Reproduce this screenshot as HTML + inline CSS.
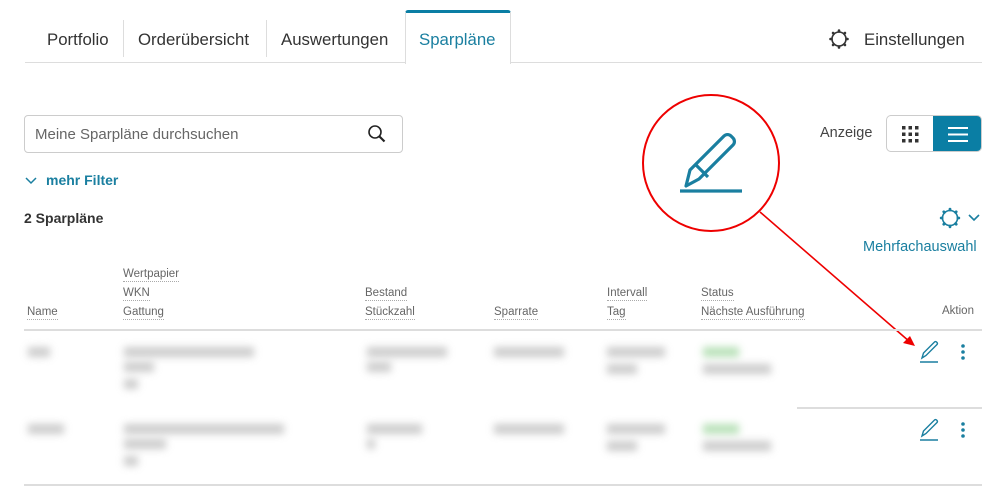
<!DOCTYPE html>
<html><head><meta charset="utf-8"><style>
*{margin:0;padding:0;box-sizing:border-box}
body{width:998px;height:496px;background:#fff;font-family:"Liberation Sans",sans-serif;position:relative;overflow:hidden;color:#333}
.a{position:absolute;white-space:nowrap}
.tab{font-size:16.8px;color:#333;top:30px}
.sep{position:absolute;top:20px;width:1px;height:37px;background:#ddd}
.h{font-size:11.5px;color:#666;border-bottom:1px dotted #aaa;line-height:14px}
.bl{position:absolute;background:#aaa;filter:blur(4px);opacity:.6;height:10px}
.teal{color:#1a7fa0}
</style></head><body>
<div class="a" style="left:25px;top:62px;width:957px;height:1px;background:#ddd"></div>
<div class="a tab" style="left:47px">Portfolio</div>
<div class="sep" style="left:123px"></div>
<div class="a tab" style="left:138px">Orderübersicht</div>
<div class="sep" style="left:266px"></div>
<div class="a tab" style="left:281px">Auswertungen</div>
<div class="a" style="left:405px;top:10px;width:106px;height:54px;background:#fff;border:1px solid #ddd;border-top:3px solid #0a7ea4;border-bottom:none;border-radius:3px 3px 0 0"></div>
<div class="a tab teal" style="left:419px">Sparpläne</div>
<svg class="a" style="left:828px;top:28px" width="22" height="22" viewBox="0 0 22 22" fill="none" stroke="#333" stroke-width="1.6"><circle cx="11" cy="11" r="7"/><g stroke-width="2.6" stroke-linecap="round"><path d="M11 2.5v1M11 18.5v1M2.5 11h1M18.5 11h1M5 5l.7.7M16.3 16.3l.7.7M5 17l.7-.7M16.3 5.7L17 5"/></g></svg>
<div class="a tab" style="left:864px">Einstellungen</div>

<div class="a" style="left:24px;top:115px;width:379px;height:38px;border:1px solid #ccc;border-radius:4px"></div>
<div class="a" style="left:35px;top:126px;font-size:15px;color:#666">Meine Sparpläne durchsuchen</div>
<svg class="a" style="left:366px;top:123px" width="22" height="22" viewBox="0 0 22 22" fill="none" stroke="#222" stroke-width="1.6"><circle cx="9" cy="9" r="6"/><path d="M13.5 13.5l5 5" stroke-width="2.2"/></svg>
<svg class="a" style="left:25px;top:177px" width="12" height="8" viewBox="0 0 12 8" fill="none" stroke="#1a7fa0" stroke-width="1.5"><path d="M1 1l5 5 5-5"/></svg>
<div class="a teal" style="left:46px;top:172px;font-size:14px;font-weight:bold">mehr Filter</div>
<div class="a" style="left:24px;top:210px;font-size:14px;font-weight:bold;color:#333">2 Sparpläne</div>

<div class="a" style="left:820px;top:125px;font-size:14.5px;color:#444">Anzeige</div>
<div class="a" style="left:886px;top:115px;width:96px;height:37px;border:1px solid #ccc;border-radius:5px;overflow:hidden">
<div style="position:absolute;right:0;top:0;width:48px;height:37px;background:#0a7ea4"></div>
<svg style="position:absolute;left:15px;top:10px" width="17" height="17" viewBox="0 0 17 17" fill="#333"><rect x="0" y="0" width="3.5" height="3.5"/><rect x="6.5" y="0" width="3.5" height="3.5"/><rect x="13" y="0" width="3.5" height="3.5"/><rect x="0" y="6.5" width="3.5" height="3.5"/><rect x="6.5" y="6.5" width="3.5" height="3.5"/><rect x="13" y="6.5" width="3.5" height="3.5"/><rect x="0" y="13" width="3.5" height="3.5"/><rect x="6.5" y="13" width="3.5" height="3.5"/><rect x="13" y="13" width="3.5" height="3.5"/></svg>
<svg style="position:absolute;left:61px;top:10px" width="20" height="17" viewBox="0 0 20 17" stroke="#fff" stroke-width="2"><path d="M0 2h20M0 8.5h20M0 15h20"/></svg>
</div>

<svg class="a" style="left:938px;top:207px" width="46" height="22" viewBox="0 0 46 22" fill="none" stroke="#1a7fa0" stroke-width="1.6"><circle cx="12" cy="11" r="7.5"/><g stroke-width="2.8" stroke-linecap="round"><path d="M12 2.2v.8M12 19v.8M3.2 11h.8M20 11h.8M5.8 4.8l.6.6M17.6 16.6l.6.6M5.8 17.2l.6-.6M17.6 5.4l.6-.6"/></g><path d="M31 8l5 5 5-5"/></svg>
<div class="a teal" style="left:863px;top:239px;font-size:14.5px">Mehrfachauswahl</div>

<svg class="a" style="left:0;top:0" width="998" height="496" fill="none">
<circle cx="711" cy="163" r="68" stroke="#e00" stroke-width="2"/>
<path d="M760 212L910 342" stroke="#e00" stroke-width="1.6"/>
<path d="M915 346l-12-3 7-7z" fill="#e00"/>
<g stroke="#1a7fa0" stroke-width="3.2" stroke-linejoin="round"><path d="M686 186l4-16 34-34a5 5 0 0 1 7 0l2 2a5 5 0 0 1 0 7l-34 34z"/><path d="M696 165l12 12"/><path d="M680 191h62"/></g>
</svg>

<div class="a h" style="left:123px;top:267px">Wertpapier</div>
<div class="a h" style="left:123px;top:286px">WKN</div>
<div class="a h" style="left:27px;top:305px">Name</div>
<div class="a h" style="left:123px;top:305px">Gattung</div>
<div class="a h" style="left:365px;top:286px">Bestand</div>
<div class="a h" style="left:365px;top:305px">Stückzahl</div>
<div class="a h" style="left:494px;top:305px">Sparrate</div>
<div class="a h" style="left:607px;top:286px">Intervall</div>
<div class="a h" style="left:607px;top:305px">Tag</div>
<div class="a h" style="left:701px;top:286px">Status</div>
<div class="a h" style="left:701px;top:305px">Nächste Ausführung</div>
<div class="a" style="left:942px;top:305px;font-size:11.5px;color:#666">Aktion</div>
<div class="a" style="left:24px;top:329px;width:958px;height:2px;background:#ddd"></div>
<div class="a" style="left:797px;top:407px;width:185px;height:2px;background:#ddd"></div>
<div class="a" style="left:24px;top:484px;width:958px;height:2px;background:#ddd"></div>

<div class="bl" style="left:28px;top:347px;width:22px"></div>
<div class="bl" style="left:124px;top:347px;width:130px"></div>
<div class="bl" style="left:124px;top:362px;width:30px"></div>
<div class="bl" style="left:124px;top:379px;width:14px"></div>
<div class="bl" style="left:367px;top:347px;width:80px"></div>
<div class="bl" style="left:367px;top:362px;width:24px"></div>
<div class="bl" style="left:494px;top:347px;width:70px"></div>
<div class="bl" style="left:607px;top:347px;width:58px"></div>
<div class="bl" style="left:607px;top:364px;width:30px"></div>
<div class="bl" style="left:703px;top:347px;width:36px;background:#8c8"></div>
<div class="bl" style="left:703px;top:364px;width:68px"></div>

<div class="bl" style="left:28px;top:424px;width:36px"></div>
<div class="bl" style="left:124px;top:424px;width:160px"></div>
<div class="bl" style="left:124px;top:439px;width:42px"></div>
<div class="bl" style="left:124px;top:456px;width:14px"></div>
<div class="bl" style="left:367px;top:424px;width:55px"></div>
<div class="bl" style="left:367px;top:439px;width:8px"></div>
<div class="bl" style="left:494px;top:424px;width:70px"></div>
<div class="bl" style="left:607px;top:424px;width:58px"></div>
<div class="bl" style="left:607px;top:441px;width:30px"></div>
<div class="bl" style="left:703px;top:424px;width:36px;background:#8c8"></div>
<div class="bl" style="left:703px;top:441px;width:68px"></div>

<svg class="a" style="left:918px;top:340px" width="56" height="24" viewBox="0 0 56 24" fill="none" stroke="#1a7fa0" stroke-width="1.4"><path d="M4 18l1.5-5 11-11a1.5 1.5 0 0 1 2 0l.5.5a1.5 1.5 0 0 1 0 2l-11 11z"/><path d="M2 22h18"/><g fill="#1a7fa0" stroke="none"><circle cx="45" cy="6" r="1.8"/><circle cx="45" cy="12" r="1.8"/><circle cx="45" cy="18" r="1.8"/></g></svg>
<svg class="a" style="left:918px;top:418px" width="56" height="24" viewBox="0 0 56 24" fill="none" stroke="#1a7fa0" stroke-width="1.4"><path d="M4 18l1.5-5 11-11a1.5 1.5 0 0 1 2 0l.5.5a1.5 1.5 0 0 1 0 2l-11 11z"/><path d="M2 22h18"/><g fill="#1a7fa0" stroke="none"><circle cx="45" cy="6" r="1.8"/><circle cx="45" cy="12" r="1.8"/><circle cx="45" cy="18" r="1.8"/></g></svg>
</body></html>
